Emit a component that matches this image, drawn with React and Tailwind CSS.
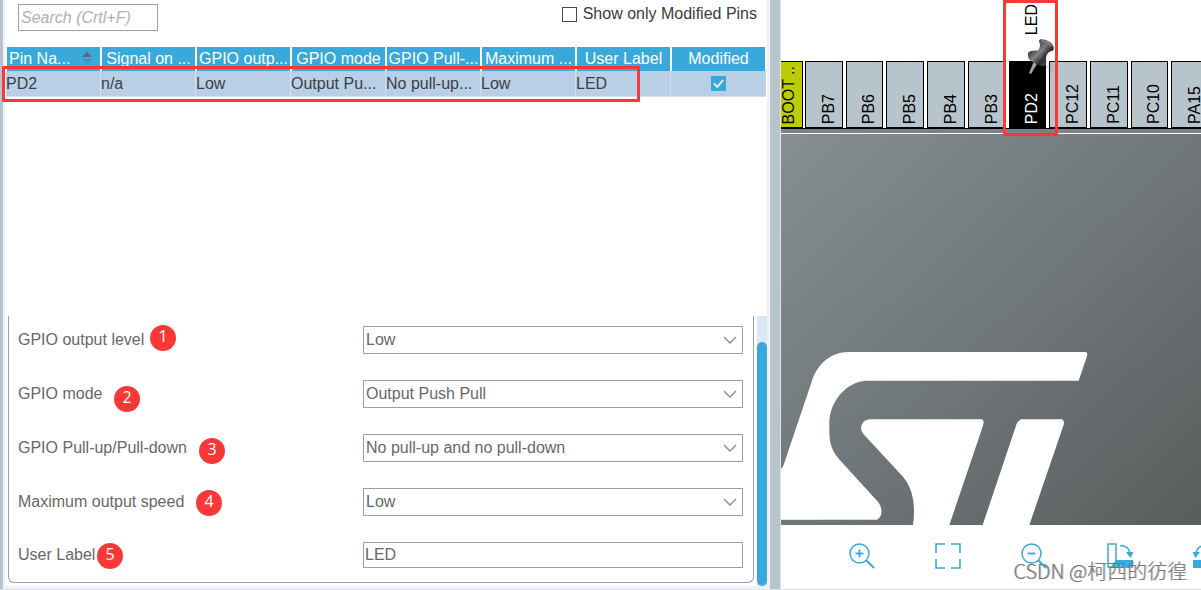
import React, { useState } from "react";

const columns = [
  "Pin Na...",
  "Signal on ...",
  "GPIO outp...",
  "GPIO mode",
  "GPIO Pull-...",
  "Maximum ...",
  "User Label",
  "Modified",
];

const rows = [["PD2", "n/a", "Low", "Output Pu...", "No pull-up...", "Low", "LED"]];

const fields = [
  { id: "level", label: "GPIO output level", options: ["Low", "High"] },
  { id: "mode", label: "GPIO mode", options: ["Output Push Pull", "Output Open Drain"] },
  {
    id: "pull",
    label: "GPIO Pull-up/Pull-down",
    options: ["No pull-up and no pull-down", "Pull-up", "Pull-down"],
  },
  { id: "speed", label: "Maximum output speed", options: ["Low", "Medium", "High"] },
];

// numbered markers that float over the form
const markers = [
  { n: 1, place: "left-[141px] top-[9px]" },
  { n: 2, place: "left-[105px] top-[70px]" },
  { n: 3, place: "left-[190px] top-[122px]" },
  { n: 4, place: "left-[187px] top-[174px]" },
  { n: 5, place: "left-[88px] top-[227px]" },
];

const pins = [
  { name: "PB7" },
  { name: "PB6" },
  { name: "PB5" },
  { name: "PB4" },
  { name: "PB3" },
  { name: "PD2", label: "LED", active: true },
  { name: "PC12" },
  { name: "PC11" },
  { name: "PC10" },
  { name: "PA15" },
];

function SortIcon() {
  return (
    <svg viewBox="0 0 10 14" className="absolute right-2 top-1 h-3.5 w-2.5">
      <path d="M0 6 L5 1 L10 6 Z" fill="#5b6770" />
      <path d="M0 8 L5 13 L10 8 Z" fill="#3f93bd" />
    </svg>
  );
}

function PinTable() {
  const [modified, setModified] = useState(true);

  return (
    <div className="relative ml-[3px] mr-px">
      <table className="w-full table-fixed border-separate border-spacing-0 text-base">
        <thead>
          <tr>
            {columns.map((name, i) => (
              <th
                key={name}
                className="relative h-6 overflow-hidden whitespace-nowrap border-x border-white bg-[#39a9dc] p-0 font-normal leading-6 text-white"
              >
                {i === 0 ? (
                  <div className="pl-0.5 text-left">
                    {name}
                    <SortIcon />
                  </div>
                ) : (
                  name
                )}
              </th>
            ))}
          </tr>
        </thead>
        <tbody>
          {rows.map((row) => (
            <tr key={row[0]} className="bg-[#b8cfe6] text-[#3b3f44]">
              {row.map((cell, i) => (
                <td
                  key={i}
                  className="h-[26px] overflow-hidden whitespace-nowrap border-b border-r border-[#d3dfec] p-0 leading-6"
                >
                  {cell}
                </td>
              ))}
              <td className="h-[26px] border-b border-[#d3dfec] p-0">
                <label className="relative mx-auto block size-[15px]">
                  <input
                    type="checkbox"
                    aria-label="Modified"
                    checked={modified}
                    onChange={(e) => setModified(e.target.checked)}
                    className="peer block size-[15px] appearance-none border border-[#39a9dc] bg-white checked:bg-[#39a9dc]"
                  />
                  <svg viewBox="0 0 15 15" className="pointer-events-none absolute inset-0 hidden peer-checked:block">
                    <path d="M3 7.5 L6.3 11 L12 4" fill="none" stroke="#fff" strokeWidth="1.8" />
                  </svg>
                </label>
              </td>
            </tr>
          ))}
        </tbody>
      </table>
      <div className="pointer-events-none absolute -left-1 top-[19px] h-9 w-[638px] border-3 border-[#fb3838]" />
    </div>
  );
}

function SelectField({ id, label, options }) {
  const [value, setValue] = useState(options[0]);

  return (
    <>
      <label htmlFor={id}>{label}</label>
      <div className="relative">
        <select
          id={id}
          value={value}
          onChange={(e) => setValue(e.target.value)}
          className="block h-7 w-full appearance-none border border-[#989fa5] bg-white pl-0.5 outline-none"
        >
          {options.map((o) => (
            <option key={o}>{o}</option>
          ))}
        </select>
        <svg viewBox="0 0 14 8" className="pointer-events-none absolute right-1.5 top-2.5 h-2 w-3.5">
          <path d="M1 1 L7 7 L13 1" fill="none" stroke="#8b8b8b" strokeWidth="1.4" />
        </svg>
      </div>
    </>
  );
}

function PinForm() {
  const [userLabel, setUserLabel] = useState("LED");

  return (
    <div className="flex gap-[3px] pl-[5px]">
      <form className="relative mb-[3px] grid flex-1 grid-cols-[345fr_380fr] items-center gap-y-[26px] rounded-b-md border-x border-b border-[#98a1a7] pb-3.5 pl-[9px] pr-2.5 pt-2.5 text-base text-[#686868]">
        {fields.map((f) => (
          <SelectField key={f.id} {...f} />
        ))}
        <label htmlFor="user-label">User Label</label>
        <input
          id="user-label"
          value={userLabel}
          onChange={(e) => setUserLabel(e.target.value)}
          className="h-[26px] w-full border border-[#989fa5] px-px outline-none"
        />
        {markers.map((m) => (
          <span
            key={m.n}
            className={`absolute ${m.place} flex size-[26px] items-center justify-center rounded-full bg-[#fb3838] pb-1 font-['Open_Sans',sans-serif] text-base leading-6 text-white`}
          >
            {m.n}
          </span>
        ))}
      </form>
      <div className="flex w-2.5 flex-col bg-[#d9e8f6] pt-[26px]">
        <div className="flex-1 rounded-full bg-[#39a9dc]" />
      </div>
    </div>
  );
}

function ConfigPane() {
  const [query, setQuery] = useState("");

  return (
    <section className="flex min-w-0 flex-col border-l-3 border-[#b8c4cb] bg-[#eff1f4] pb-[3px] pr-[3px]">
      <div className="ml-[2px] flex flex-1 flex-col bg-white">
        <div className="flex h-[47px] items-start justify-between pl-[13px] pr-2.5 pt-1">
          <input
            value={query}
            onChange={(e) => setQuery(e.target.value)}
            placeholder="Search (Crtl+F)"
            aria-label="Search"
            className="h-[27px] w-[140px] border border-[#98a1a7] px-0.5 text-base italic outline-none placeholder:text-[#b0b0b0]"
          />
          <label className="flex h-5 items-center gap-1.5 text-base text-[#3b3b3b]">
            <input type="checkbox" className="size-[15px] appearance-none border border-[#4a4a4a] bg-white checked:bg-[#39a9dc]" />
            Show only Modified Pins
          </label>
        </div>
        <div className="-ml-[2px] flex-1">
          <PinTable />
        </div>
        <div className="-ml-[2px]">
          <PinForm />
        </div>
      </div>
    </section>
  );
}

function PushPin() {
  return (
    <svg viewBox="0 0 28 38" className="absolute left-[18px] top-[38px] z-10 h-[38px] w-7">
      <defs>
        <linearGradient id="pin-body" x1="0" y1="0" x2="1" y2="1">
          <stop offset="0" stopColor="#2a2a2a" />
          <stop offset="0.4" stopColor="#858585" />
          <stop offset="0.7" stopColor="#2c2c2c" />
          <stop offset="1" stopColor="#4a4a4a" />
        </linearGradient>
        <linearGradient id="pin-head" x1="0" y1="0" x2="1" y2="1">
          <stop offset="0" stopColor="#444" />
          <stop offset="0.5" stopColor="#777" />
          <stop offset="1" stopColor="#111" />
        </linearGradient>
      </defs>
      <path d="M18 28 L26 24 L25 36 Z" fill="#777" opacity="0.2" />
      <path d="M7 23 L10 26 L4 36 L2 35 Z" fill="#a3a3a3" />
      <path d="M1 15 C4 12 10 12 14 14 C18 16 20 20 19 27 C17 29 13 28 10 26 C5 24 0 22 1 15 Z" fill="url(#pin-body)" />
      <path d="M13 6 L24 13 C20 15 19 17 19 22 C16 16 11 14 8 14 C12 13 13 10 13 6 Z" fill="url(#pin-body)" />
      <path d="M12 3 C12 0 19 1 23 4 C27 7 28 12 25 13 C21 14 12 8 12 3 Z" fill="url(#pin-head)" />
      <path d="M14 3 C17 2 22 5 24 8" fill="none" stroke="#999" strokeWidth="1" />
    </svg>
  );
}

function ChipPin({ name, label, active }) {
  return (
    <div className="relative min-w-0">
      <div className="flex h-[61px] items-end justify-end pb-[26px] pr-1">
        {label && <span className="rotate-180 leading-5 [writing-mode:vertical-rl]">{label}</span>}
      </div>
      <div
        className={
          active
            ? "flex h-[67px] items-end justify-end overflow-hidden border border-black bg-black pb-[3px] pr-[3px] text-white"
            : "flex h-[67px] items-end justify-end overflow-hidden border border-black bg-[#b8c4cb] pb-[3px] pr-[3px]"
        }
      >
        <span className="rotate-180 whitespace-nowrap leading-5 [writing-mode:vertical-rl]">{name}</span>
      </div>
      {active && (
        <>
          <PushPin />
          <div className="pointer-events-none absolute -left-1.5 top-0 z-10 h-[136px] w-[55px] border-3 border-[#fb3838]" />
        </>
      )}
    </div>
  );
}

function StLogo() {
  return (
    <svg viewBox="30 0 960 585" className="h-[195px] w-80 shrink-0" fill="#fff">
      <path d="M30 416 L36 410 L122 155 C138 105 175 66 235 66 H944 Q951 68 948 78 L923 152 H285 C225 156 175 215 175 280 V310 C176 345 186 368 207 391 L322 517 C338 540 332 563 318 569 H30 Z" />
      <path d="M298 268 H633 Q640 272 637 284 L535 585 H426 C433 535 430 480 396 440 L277 312 C262 292 275 268 298 268 Z" />
      <path d="M750 268 H873 Q881 272 878 284 L775 585 H635 L736 284 Q740 274 750 268 Z" />
    </svg>
  );
}

function ZoomIcon({ plus }) {
  return (
    <svg viewBox="0 0 26 26" className="size-[26px]" fill="none" stroke="#39a9dc" strokeWidth="1.5">
      <circle cx="10.5" cy="10.5" r="9.5" />
      <path d="M17.5 17.5 L25 25" strokeWidth="2" />
      <path d="M6.5 10.5 H14.5" strokeWidth="1.8" />
      {plus && <path d="M10.5 6.5 V14.5" strokeWidth="1.8" />}
    </svg>
  );
}

function FitIcon() {
  return (
    <svg viewBox="0 0 26 26" className="size-[26px]" fill="none" stroke="#39a9dc" strokeWidth="1.6">
      <path d="M1 10 V1 H10 M16 1 H25 V10 M25 16 V25 H16 M10 25 H1 V16" />
    </svg>
  );
}

function RotateIcon() {
  return (
    <svg viewBox="0 0 26 26" className="size-[26px]" fill="none" stroke="#39a9dc" strokeWidth="1.5">
      <path d="M1 1 H9 V24 H1 Z" />
      <path d="M9 17 H26 V25 H3 Z" fill="#39a9dc" stroke="none" />
      <path d="M13 2.5 C18 2.5 22 5 23 10" />
      <path d="M19 9 H26.5 L23.5 15 Z" fill="#39a9dc" stroke="none" />
    </svg>
  );
}

function ChipPane() {
  return (
    <section className="relative flex min-w-0 flex-col overflow-hidden border-l border-[#dfe4e7] bg-white">
      <div className="flex border-b border-black text-base text-black">
        <div className="w-[22px] shrink-0 pt-[61px]">
          <div className="flex h-[67px] items-end justify-end border-b border-r border-t border-black bg-[#bbcc00] pb-[3px] pr-[3px]">
            <span className="rotate-180 whitespace-nowrap leading-5 [writing-mode:vertical-rl]">BOOT ..</span>
          </div>
        </div>
        {/* the row of pins runs on past the right edge */}
        <div className="-mr-2 ml-[2px] grid flex-1 grid-cols-10 gap-x-[3px]">
          {pins.map((p) => (
            <ChipPin key={p.name} {...p} />
          ))}
        </div>
      </div>
      <div className="h-1 bg-[#7c8386]" />
      <div className="flex flex-1 items-end border-t border-white bg-linear-to-br from-[#878e91] via-[#70777a] to-[#595d5d]">
        <StLogo />
      </div>
      <div className="flex h-16 items-center gap-[60px] pb-0.5 pl-[68px]">
        <button type="button" aria-label="Zoom in" className="shrink-0">
          <ZoomIcon plus />
        </button>
        <button type="button" aria-label="Best fit" className="shrink-0">
          <FitIcon />
        </button>
        <button type="button" aria-label="Zoom out" className="shrink-0">
          <ZoomIcon />
        </button>
        <button type="button" aria-label="Rotate clockwise" className="shrink-0">
          <RotateIcon />
        </button>
        <button type="button" aria-label="Rotate counter-clockwise" className="shrink-0 -scale-x-100">
          <RotateIcon />
        </button>
      </div>
      <p className="pointer-events-none absolute bottom-1.5 right-[14px] whitespace-nowrap font-['Noto_Sans_CJK_SC',sans-serif] text-[20px] font-light leading-6 text-[#777] [text-shadow:1px_0_0_#bbb]">
        CSDN @柯西的彷徨
      </p>
    </section>
  );
}

export default function App() {
  return (
    <div className="grid min-h-screen grid-cols-[770fr_10px_421fr] border-b border-[#e3e3e3] bg-white font-['Liberation_Sans',Arial,sans-serif]">
      <ConfigPane />
      <div className="bg-[#b8c4cb]" />
      <ChipPane />
    </div>
  );
}
